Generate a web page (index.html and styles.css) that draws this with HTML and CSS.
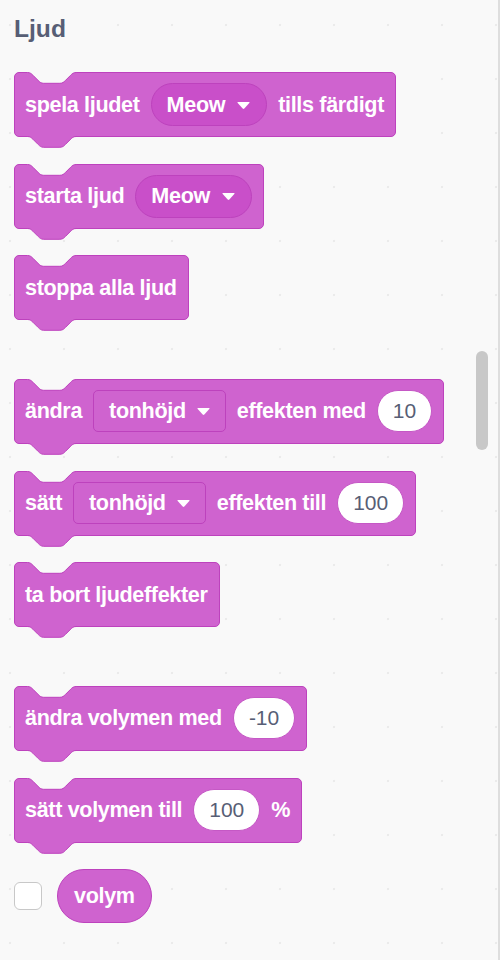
FILE: index.html
```html
<!DOCTYPE html>
<html lang="sv">
<head>
<meta charset="utf-8">
<title>Ljud</title>
<link rel="stylesheet" href="styles.css">
</head>
<body>
<div class="palette">
  <h2 class="heading">Ljud</h2>

  <div class="group">
    <div class="block">
      <svg class="notch" width="50" height="13" viewBox="0 0 50 13"><path class="notch-fill" d="M0.5,0 V0.5 c2.7,0 4.05,1.35 5.4,2.7 l5.4,5.4 c1.35,1.35 2.7,2.7 5.4,2.7 h16.2 c2.7,0 4.05,-1.35 5.4,-2.7 l5.4,-5.4 c1.35,-1.35 2.7,-2.7 5.4,-2.7 V0 Z"/><path class="edge" d="M0.5,0.5 c2.7,0 4.05,1.35 5.4,2.7 l5.4,5.4 c1.35,1.35 2.7,2.7 5.4,2.7 h16.2 c2.7,0 4.05,-1.35 5.4,-2.7 l5.4,-5.4 c1.35,-1.35 2.7,-2.7 5.4,-2.7"/></svg>
      <span class="label">spela ljudet</span>
      <span class="menu">Meow<svg class="arrow" width="13" height="7" viewBox="0 0 13 7"><path d="M1.2,0 H11.8 Q13.2,0 12.3,1 L7.3,6.5 Q6.5,7.3 5.7,6.5 L0.7,1 Q-0.2,0 1.2,0 Z"/></svg></span>
      <span class="label">tills färdigt</span>
      <svg class="tab" width="50" height="13" viewBox="0 0 50 13"><path class="tab-fill" d="M0.5,0 V0.5 c2.7,0 4.05,1.35 5.4,2.7 l5.4,5.4 c1.35,1.35 2.7,2.7 5.4,2.7 h16.2 c2.7,0 4.05,-1.35 5.4,-2.7 l5.4,-5.4 c1.35,-1.35 2.7,-2.7 5.4,-2.7 V0 Z"/><path class="edge" d="M0.5,0.5 c2.7,0 4.05,1.35 5.4,2.7 l5.4,5.4 c1.35,1.35 2.7,2.7 5.4,2.7 h16.2 c2.7,0 4.05,-1.35 5.4,-2.7 l5.4,-5.4 c1.35,-1.35 2.7,-2.7 5.4,-2.7"/></svg>
    </div>

    <div class="block">
      <svg class="notch" width="50" height="13" viewBox="0 0 50 13"><path class="notch-fill" d="M0.5,0 V0.5 c2.7,0 4.05,1.35 5.4,2.7 l5.4,5.4 c1.35,1.35 2.7,2.7 5.4,2.7 h16.2 c2.7,0 4.05,-1.35 5.4,-2.7 l5.4,-5.4 c1.35,-1.35 2.7,-2.7 5.4,-2.7 V0 Z"/><path class="edge" d="M0.5,0.5 c2.7,0 4.05,1.35 5.4,2.7 l5.4,5.4 c1.35,1.35 2.7,2.7 5.4,2.7 h16.2 c2.7,0 4.05,-1.35 5.4,-2.7 l5.4,-5.4 c1.35,-1.35 2.7,-2.7 5.4,-2.7"/></svg>
      <span class="label">starta ljud</span>
      <span class="menu">Meow<svg class="arrow" width="13" height="7" viewBox="0 0 13 7"><path d="M1.2,0 H11.8 Q13.2,0 12.3,1 L7.3,6.5 Q6.5,7.3 5.7,6.5 L0.7,1 Q-0.2,0 1.2,0 Z"/></svg></span>
      <svg class="tab" width="50" height="13" viewBox="0 0 50 13"><path class="tab-fill" d="M0.5,0 V0.5 c2.7,0 4.05,1.35 5.4,2.7 l5.4,5.4 c1.35,1.35 2.7,2.7 5.4,2.7 h16.2 c2.7,0 4.05,-1.35 5.4,-2.7 l5.4,-5.4 c1.35,-1.35 2.7,-2.7 5.4,-2.7 V0 Z"/><path class="edge" d="M0.5,0.5 c2.7,0 4.05,1.35 5.4,2.7 l5.4,5.4 c1.35,1.35 2.7,2.7 5.4,2.7 h16.2 c2.7,0 4.05,-1.35 5.4,-2.7 l5.4,-5.4 c1.35,-1.35 2.7,-2.7 5.4,-2.7"/></svg>
    </div>

    <div class="block">
      <svg class="notch" width="50" height="13" viewBox="0 0 50 13"><path class="notch-fill" d="M0.5,0 V0.5 c2.7,0 4.05,1.35 5.4,2.7 l5.4,5.4 c1.35,1.35 2.7,2.7 5.4,2.7 h16.2 c2.7,0 4.05,-1.35 5.4,-2.7 l5.4,-5.4 c1.35,-1.35 2.7,-2.7 5.4,-2.7 V0 Z"/><path class="edge" d="M0.5,0.5 c2.7,0 4.05,1.35 5.4,2.7 l5.4,5.4 c1.35,1.35 2.7,2.7 5.4,2.7 h16.2 c2.7,0 4.05,-1.35 5.4,-2.7 l5.4,-5.4 c1.35,-1.35 2.7,-2.7 5.4,-2.7"/></svg>
      <span class="label">stoppa alla ljud</span>
      <svg class="tab" width="50" height="13" viewBox="0 0 50 13"><path class="tab-fill" d="M0.5,0 V0.5 c2.7,0 4.05,1.35 5.4,2.7 l5.4,5.4 c1.35,1.35 2.7,2.7 5.4,2.7 h16.2 c2.7,0 4.05,-1.35 5.4,-2.7 l5.4,-5.4 c1.35,-1.35 2.7,-2.7 5.4,-2.7 V0 Z"/><path class="edge" d="M0.5,0.5 c2.7,0 4.05,1.35 5.4,2.7 l5.4,5.4 c1.35,1.35 2.7,2.7 5.4,2.7 h16.2 c2.7,0 4.05,-1.35 5.4,-2.7 l5.4,-5.4 c1.35,-1.35 2.7,-2.7 5.4,-2.7"/></svg>
    </div>
  </div>

  <div class="group">
    <div class="block">
      <svg class="notch" width="50" height="13" viewBox="0 0 50 13"><path class="notch-fill" d="M0.5,0 V0.5 c2.7,0 4.05,1.35 5.4,2.7 l5.4,5.4 c1.35,1.35 2.7,2.7 5.4,2.7 h16.2 c2.7,0 4.05,-1.35 5.4,-2.7 l5.4,-5.4 c1.35,-1.35 2.7,-2.7 5.4,-2.7 V0 Z"/><path class="edge" d="M0.5,0.5 c2.7,0 4.05,1.35 5.4,2.7 l5.4,5.4 c1.35,1.35 2.7,2.7 5.4,2.7 h16.2 c2.7,0 4.05,-1.35 5.4,-2.7 l5.4,-5.4 c1.35,-1.35 2.7,-2.7 5.4,-2.7"/></svg>
      <span class="label">ändra</span>
      <span class="field">tonhöjd<svg class="arrow" width="13" height="7" viewBox="0 0 13 7"><path d="M1.2,0 H11.8 Q13.2,0 12.3,1 L7.3,6.5 Q6.5,7.3 5.7,6.5 L0.7,1 Q-0.2,0 1.2,0 Z"/></svg></span>
      <span class="label">effekten med</span>
      <span class="num">10</span>
      <svg class="tab" width="50" height="13" viewBox="0 0 50 13"><path class="tab-fill" d="M0.5,0 V0.5 c2.7,0 4.05,1.35 5.4,2.7 l5.4,5.4 c1.35,1.35 2.7,2.7 5.4,2.7 h16.2 c2.7,0 4.05,-1.35 5.4,-2.7 l5.4,-5.4 c1.35,-1.35 2.7,-2.7 5.4,-2.7 V0 Z"/><path class="edge" d="M0.5,0.5 c2.7,0 4.05,1.35 5.4,2.7 l5.4,5.4 c1.35,1.35 2.7,2.7 5.4,2.7 h16.2 c2.7,0 4.05,-1.35 5.4,-2.7 l5.4,-5.4 c1.35,-1.35 2.7,-2.7 5.4,-2.7"/></svg>
    </div>

    <div class="block">
      <svg class="notch" width="50" height="13" viewBox="0 0 50 13"><path class="notch-fill" d="M0.5,0 V0.5 c2.7,0 4.05,1.35 5.4,2.7 l5.4,5.4 c1.35,1.35 2.7,2.7 5.4,2.7 h16.2 c2.7,0 4.05,-1.35 5.4,-2.7 l5.4,-5.4 c1.35,-1.35 2.7,-2.7 5.4,-2.7 V0 Z"/><path class="edge" d="M0.5,0.5 c2.7,0 4.05,1.35 5.4,2.7 l5.4,5.4 c1.35,1.35 2.7,2.7 5.4,2.7 h16.2 c2.7,0 4.05,-1.35 5.4,-2.7 l5.4,-5.4 c1.35,-1.35 2.7,-2.7 5.4,-2.7"/></svg>
      <span class="label">sätt</span>
      <span class="field">tonhöjd<svg class="arrow" width="13" height="7" viewBox="0 0 13 7"><path d="M1.2,0 H11.8 Q13.2,0 12.3,1 L7.3,6.5 Q6.5,7.3 5.7,6.5 L0.7,1 Q-0.2,0 1.2,0 Z"/></svg></span>
      <span class="label">effekten till</span>
      <span class="num">100</span>
      <svg class="tab" width="50" height="13" viewBox="0 0 50 13"><path class="tab-fill" d="M0.5,0 V0.5 c2.7,0 4.05,1.35 5.4,2.7 l5.4,5.4 c1.35,1.35 2.7,2.7 5.4,2.7 h16.2 c2.7,0 4.05,-1.35 5.4,-2.7 l5.4,-5.4 c1.35,-1.35 2.7,-2.7 5.4,-2.7 V0 Z"/><path class="edge" d="M0.5,0.5 c2.7,0 4.05,1.35 5.4,2.7 l5.4,5.4 c1.35,1.35 2.7,2.7 5.4,2.7 h16.2 c2.7,0 4.05,-1.35 5.4,-2.7 l5.4,-5.4 c1.35,-1.35 2.7,-2.7 5.4,-2.7"/></svg>
    </div>

    <div class="block">
      <svg class="notch" width="50" height="13" viewBox="0 0 50 13"><path class="notch-fill" d="M0.5,0 V0.5 c2.7,0 4.05,1.35 5.4,2.7 l5.4,5.4 c1.35,1.35 2.7,2.7 5.4,2.7 h16.2 c2.7,0 4.05,-1.35 5.4,-2.7 l5.4,-5.4 c1.35,-1.35 2.7,-2.7 5.4,-2.7 V0 Z"/><path class="edge" d="M0.5,0.5 c2.7,0 4.05,1.35 5.4,2.7 l5.4,5.4 c1.35,1.35 2.7,2.7 5.4,2.7 h16.2 c2.7,0 4.05,-1.35 5.4,-2.7 l5.4,-5.4 c1.35,-1.35 2.7,-2.7 5.4,-2.7"/></svg>
      <span class="label">ta bort ljudeffekter</span>
      <svg class="tab" width="50" height="13" viewBox="0 0 50 13"><path class="tab-fill" d="M0.5,0 V0.5 c2.7,0 4.05,1.35 5.4,2.7 l5.4,5.4 c1.35,1.35 2.7,2.7 5.4,2.7 h16.2 c2.7,0 4.05,-1.35 5.4,-2.7 l5.4,-5.4 c1.35,-1.35 2.7,-2.7 5.4,-2.7 V0 Z"/><path class="edge" d="M0.5,0.5 c2.7,0 4.05,1.35 5.4,2.7 l5.4,5.4 c1.35,1.35 2.7,2.7 5.4,2.7 h16.2 c2.7,0 4.05,-1.35 5.4,-2.7 l5.4,-5.4 c1.35,-1.35 2.7,-2.7 5.4,-2.7"/></svg>
    </div>
  </div>

  <div class="group">
    <div class="block">
      <svg class="notch" width="50" height="13" viewBox="0 0 50 13"><path class="notch-fill" d="M0.5,0 V0.5 c2.7,0 4.05,1.35 5.4,2.7 l5.4,5.4 c1.35,1.35 2.7,2.7 5.4,2.7 h16.2 c2.7,0 4.05,-1.35 5.4,-2.7 l5.4,-5.4 c1.35,-1.35 2.7,-2.7 5.4,-2.7 V0 Z"/><path class="edge" d="M0.5,0.5 c2.7,0 4.05,1.35 5.4,2.7 l5.4,5.4 c1.35,1.35 2.7,2.7 5.4,2.7 h16.2 c2.7,0 4.05,-1.35 5.4,-2.7 l5.4,-5.4 c1.35,-1.35 2.7,-2.7 5.4,-2.7"/></svg>
      <span class="label">ändra volymen med</span>
      <span class="num">-10</span>
      <svg class="tab" width="50" height="13" viewBox="0 0 50 13"><path class="tab-fill" d="M0.5,0 V0.5 c2.7,0 4.05,1.35 5.4,2.7 l5.4,5.4 c1.35,1.35 2.7,2.7 5.4,2.7 h16.2 c2.7,0 4.05,-1.35 5.4,-2.7 l5.4,-5.4 c1.35,-1.35 2.7,-2.7 5.4,-2.7 V0 Z"/><path class="edge" d="M0.5,0.5 c2.7,0 4.05,1.35 5.4,2.7 l5.4,5.4 c1.35,1.35 2.7,2.7 5.4,2.7 h16.2 c2.7,0 4.05,-1.35 5.4,-2.7 l5.4,-5.4 c1.35,-1.35 2.7,-2.7 5.4,-2.7"/></svg>
    </div>

    <div class="block">
      <svg class="notch" width="50" height="13" viewBox="0 0 50 13"><path class="notch-fill" d="M0.5,0 V0.5 c2.7,0 4.05,1.35 5.4,2.7 l5.4,5.4 c1.35,1.35 2.7,2.7 5.4,2.7 h16.2 c2.7,0 4.05,-1.35 5.4,-2.7 l5.4,-5.4 c1.35,-1.35 2.7,-2.7 5.4,-2.7 V0 Z"/><path class="edge" d="M0.5,0.5 c2.7,0 4.05,1.35 5.4,2.7 l5.4,5.4 c1.35,1.35 2.7,2.7 5.4,2.7 h16.2 c2.7,0 4.05,-1.35 5.4,-2.7 l5.4,-5.4 c1.35,-1.35 2.7,-2.7 5.4,-2.7"/></svg>
      <span class="label">sätt volymen till</span>
      <span class="num">100</span>
      <span class="label">%</span>
      <svg class="tab" width="50" height="13" viewBox="0 0 50 13"><path class="tab-fill" d="M0.5,0 V0.5 c2.7,0 4.05,1.35 5.4,2.7 l5.4,5.4 c1.35,1.35 2.7,2.7 5.4,2.7 h16.2 c2.7,0 4.05,-1.35 5.4,-2.7 l5.4,-5.4 c1.35,-1.35 2.7,-2.7 5.4,-2.7 V0 Z"/><path class="edge" d="M0.5,0.5 c2.7,0 4.05,1.35 5.4,2.7 l5.4,5.4 c1.35,1.35 2.7,2.7 5.4,2.7 h16.2 c2.7,0 4.05,-1.35 5.4,-2.7 l5.4,-5.4 c1.35,-1.35 2.7,-2.7 5.4,-2.7"/></svg>
    </div>

    <div class="reporter-row">
      <span class="checkbox"></span>
      <span class="reporter">volym</span>
    </div>
  </div>

  <div class="scrollbar"></div>
</div>
</body>
</html>
```

FILE: styles.css
```css
html, body {
  margin: 0;
  padding: 0;
}

body {
  width: 500px;
  height: 960px;
  overflow: hidden;
  background-color: #f9f9f9;
  background-image: radial-gradient(circle at center, #ebebeb 0, #ebebeb 1px, transparent 1.6px);
  background-size: 54px 54px;
  background-position: -17px -2px;
  font-family: "Liberation Sans", Arial, Helvetica, sans-serif;
}

.palette {
  position: relative;
  box-sizing: border-box;
  width: 500px;
  height: 960px;
  padding: 14px 0 0 14px;
  border-right: 2px solid #dedede;
}

.heading {
  margin: 0 0 28px;
  font-size: 24.6px;
  line-height: 30px;
  font-weight: bold;
  color: #575e75;
}

.group {
  display: flex;
  flex-direction: column;
  align-items: flex-start;
  gap: 26.6px;
}

.group + .group {
  margin-top: 58.8px;
}

.block {
  position: relative;
  box-sizing: border-box;
  height: 65px;
  display: inline-flex;
  align-items: center;
  gap: 11px;
  padding: 0 11px 0 10px;
  background: #cf63cf;
  border: 1px solid #bd42bd;
  border-radius: 5px;
  color: #fff;
  font-size: 21.6px;
  letter-spacing: -0.35px;
  font-weight: bold;
  white-space: nowrap;
}

.notch {
  position: absolute;
  top: -1px;
  left: 12px;
  overflow: visible;
}

.tab {
  position: absolute;
  top: 100%;
  left: 12px;
  overflow: visible;
}

.notch-fill {
  fill: #f9f9f9;
}

.tab-fill {
  fill: #cf63cf;
}

.edge {
  fill: none;
  stroke: #bd42bd;
  stroke-width: 1;
}

.label {
  line-height: 24px;
}

.menu {
  box-sizing: border-box;
  height: 43px;
  display: inline-flex;
  align-items: center;
  gap: 12px;
  padding: 0 16px 0 15px;
  background: #c94fc9;
  border: 1px solid #bd42bd;
  border-radius: 22px;
}

.field {
  box-sizing: border-box;
  height: 42px;
  display: inline-flex;
  align-items: center;
  gap: 11px;
  padding: 0 15px 0 15px;
  background: #cf63cf;
  border: 1px solid #bd42bd;
  border-radius: 5px;
}

.arrow {
  fill: #fff;
  flex: none;
  margin-top: 1px;
}

.num {
  box-sizing: border-box;
  height: 42px;
  min-width: 53px;
  display: inline-flex;
  align-items: center;
  justify-content: center;
  padding: 0 15px;
  background: #fff;
  border: 1px solid #c558c5;
  border-radius: 21px;
  color: #575e75;
  font-weight: normal;
  letter-spacing: 0;
  font-size: 21px;
}

.reporter-row {
  display: flex;
  align-items: center;
  gap: 15px;
}

.checkbox {
  box-sizing: border-box;
  width: 28px;
  height: 28px;
  background: #fff;
  border: 1px solid #c8c8c8;
  border-radius: 6px;
}

.reporter {
  box-sizing: border-box;
  height: 54px;
  display: inline-flex;
  align-items: center;
  padding: 0 16px;
  background: #cf63cf;
  border: 1px solid #bd42bd;
  border-radius: 27px;
  color: #fff;
  font-size: 21.6px;
  letter-spacing: -0.35px;
  font-weight: bold;
}

.scrollbar {
  position: absolute;
  left: 476px;
  top: 351px;
  width: 12px;
  height: 99px;
  border-radius: 6px;
  background: #c8c8c8;
}
```
